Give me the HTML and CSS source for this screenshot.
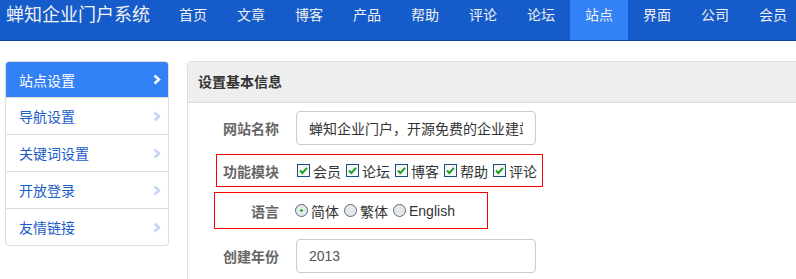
FILE: index.html
```html
<!DOCTYPE html>
<html lang="zh-CN">
<head>
    <meta charset="UTF-8">
    <title>站点设置 - 蝉知企业门户系统</title>
    <link rel="stylesheet" href="styles.css">
</head>
<body>
    <div class="navbar">
        <a class="brand" href="#">蝉知企业门户系统</a>
        <a class="nav-link" href="#">首页</a>
        <a class="nav-link" href="#">文章</a>
        <a class="nav-link" href="#">博客</a>
        <a class="nav-link" href="#">产品</a>
        <a class="nav-link" href="#">帮助</a>
        <a class="nav-link" href="#">评论</a>
        <a class="nav-link" href="#">论坛</a>
        <a class="nav-link active" href="#">站点</a>
        <a class="nav-link" href="#">界面</a>
        <a class="nav-link" href="#">公司</a>
        <a class="nav-link" href="#">会员</a>
    </div>

    <div class="page">
        <ul class="side-menu">
            <li class="active"><a href="#">站点设置<svg class="chevron" width="8" height="11" viewBox="0 0 8 11"><path d="M1.5 1.5 L6 5.5 L1.5 9.5" /></svg></a></li>
            <li><a href="#">导航设置<svg class="chevron" width="8" height="11" viewBox="0 0 8 11"><path d="M1.5 1.5 L6 5.5 L1.5 9.5" /></svg></a></li>
            <li><a href="#">关键词设置<svg class="chevron" width="8" height="11" viewBox="0 0 8 11"><path d="M1.5 1.5 L6 5.5 L1.5 9.5" /></svg></a></li>
            <li><a href="#">开放登录<svg class="chevron" width="8" height="11" viewBox="0 0 8 11"><path d="M1.5 1.5 L6 5.5 L1.5 9.5" /></svg></a></li>
            <li><a href="#">友情链接<svg class="chevron" width="8" height="11" viewBox="0 0 8 11"><path d="M1.5 1.5 L6 5.5 L1.5 9.5" /></svg></a></li>
        </ul>

        <div class="panel">
            <div class="panel-heading">设置基本信息</div>
            <div class="panel-body">
                <div class="form-row row-name">
                    <label class="form-label">网站名称</label>
                    <input class="form-input" type="text" value="蝉知企业门户，开源免费的企业建站系统" readonly>
                </div>

                <div class="form-row mark row-modules">
                    <label class="form-label">功能模块</label>
                    <div class="options">
                        <span class="option"><svg class="box" width="13" height="13" viewBox="0 0 13 13"><rect x="0.5" y="0.5" width="12" height="12" /><path d="M3 6.5 L5.4 9 L10 3.8" /></svg>会员</span>
                        <span class="option"><svg class="box" width="13" height="13" viewBox="0 0 13 13"><rect x="0.5" y="0.5" width="12" height="12" /><path d="M3 6.5 L5.4 9 L10 3.8" /></svg>论坛</span>
                        <span class="option"><svg class="box" width="13" height="13" viewBox="0 0 13 13"><rect x="0.5" y="0.5" width="12" height="12" /><path d="M3 6.5 L5.4 9 L10 3.8" /></svg>博客</span>
                        <span class="option"><svg class="box" width="13" height="13" viewBox="0 0 13 13"><rect x="0.5" y="0.5" width="12" height="12" /><path d="M3 6.5 L5.4 9 L10 3.8" /></svg>帮助</span>
                        <span class="option"><svg class="box" width="13" height="13" viewBox="0 0 13 13"><rect x="0.5" y="0.5" width="12" height="12" /><path d="M3 6.5 L5.4 9 L10 3.8" /></svg>评论</span>
                    </div>
                </div>

                <div class="form-row mark row-lang">
                    <label class="form-label">语言</label>
                    <div class="options">
                        <span class="option"><svg class="radio" width="13" height="13" viewBox="0 0 13 13"><circle cx="6.5" cy="6.5" r="6" /><circle class="dot" cx="6.5" cy="6.5" r="2" /></svg>简体</span>
                        <span class="option"><svg class="radio" width="13" height="13" viewBox="0 0 13 13"><circle cx="6.5" cy="6.5" r="6" /></svg>繁体</span>
                        <span class="option"><svg class="radio" width="13" height="13" viewBox="0 0 13 13"><circle cx="6.5" cy="6.5" r="6" /></svg>English</span>
                    </div>
                </div>

                <div class="form-row row-year">
                    <label class="form-label">创建年份</label>
                    <input class="form-input light" type="text" value="2013" readonly>
                </div>
            </div>
        </div>
    </div>
</body>
</html>
```

FILE: styles.css
```css
html, body {
    overflow: hidden;
}
body {
    margin: 0;
    font-family: "Liberation Sans", "Noto Sans CJK SC", sans-serif;
    font-size: 14px;
    color: #333;
    background: #fff;
}
a {
    text-decoration: none;
}

/* top navbar */
.navbar {
    display: flex;
    height: 40px;
    background: #155bc9;
    border-bottom: 1px solid #0f479f;
    white-space: nowrap;
}
.brand {
    flex: none;
    padding: 3px 14px 0 6px;
    font-size: 18px;
    line-height: 24px;
    color: #f2f2f2;
}
.nav-link {
    flex: none;
    width: 28px;
    padding: 5px 15px 0;
    line-height: 20px;
    color: #f0f0f0;
}
.nav-link.active {
    background: #3381f7;
}

/* layout */
.page {
    display: flex;
    align-items: flex-start;
    gap: 18px;
    padding: 20px 0 0 5px;
}

/* side menu */
.side-menu {
    list-style: none;
    margin: 0;
    padding: 0;
    width: 162px;
    flex: none;
    border: 1px solid #ddd;
    border-radius: 4px;
    overflow: hidden;
}
.side-menu li + li {
    border-top: 1px solid #ddd;
}
.side-menu a {
    display: flex;
    align-items: center;
    justify-content: space-between;
    height: 36px;
    padding: 0 7px 0 13px;
    color: #1a5cc8;
}
.side-menu .active a {
    background: #3381f7;
    color: #fff;
    height: 35px;
}
.chevron path {
    fill: none;
    stroke: #c2d6f3;
    stroke-width: 2.4;
}
.active .chevron path {
    stroke: #fff;
}

/* panel */
.panel {
    width: 620px;
    flex: none;
    border: 1px solid #ddd;
    border-radius: 4px;
    height: 230px;
}
.panel-heading {
    height: 40px;
    line-height: 40px;
    padding-left: 10px;
    background: #eee;
    border-bottom: 1px solid #ddd;
    font-weight: bold;
    color: #333;
}
.panel-body {
    padding-top: 8px;
}
.form-row {
    display: flex;
    align-items: center;
}
.form-label {
    width: 91px;
    padding-right: 17px;
    text-align: right;
    font-weight: bold;
    color: #666;
    flex: none;
}
.form-input {
    box-sizing: border-box;
    width: 240px;
    height: 34px;
    padding: 6px 12px;
    border: 1px solid #ccc;
    border-radius: 4px;
    font: inherit;
    color: #333;
    outline: none;
}
.form-input.light {
    color: #555;
}

/* red outlined rows */
.mark {
    border: 1px solid #f00;
    box-sizing: border-box;
}
.row-modules {
    margin: 9px 0 0 28px;
    width: 327px;
    height: 33px;
}
.row-modules .form-label {
    width: 62px;
    padding-right: 18px;
}
.row-lang {
    margin: 5px 0 0 26px;
    width: 274px;
    height: 37px;
}
.row-lang .form-label {
    width: 64px;
    padding-right: 16px;
}
.row-year {
    margin-top: 10px;
}

.options {
    display: flex;
    align-items: center;
}
.option {
    display: flex;
    align-items: center;
    gap: 3px;
    margin-right: 5px;
    color: #333;
}
.box rect {
    fill: #f6f6f6;
    stroke: #1c4f7e;
}
.box path {
    fill: none;
    stroke: #1fa01f;
    stroke-width: 2;
}
.radio circle {
    fill: #e6e6e6;
    stroke: #4e6e8e;
}
.radio circle.dot {
    fill: #2aa52a;
    stroke: #fff;
    stroke-width: 1;
}
```
